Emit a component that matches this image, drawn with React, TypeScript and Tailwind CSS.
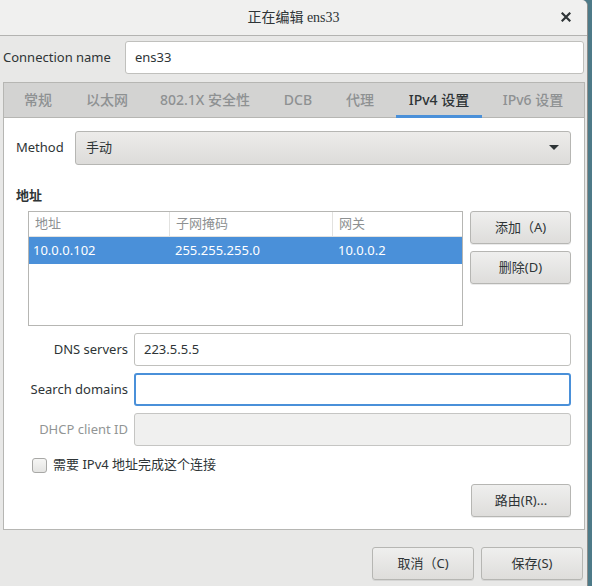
import React from "react";

const font = { fontFamily: '"Noto Sans", "Noto Sans CJK SC", sans-serif' };

function Btn({ children, className = "" }: { children: React.ReactNode; className?: string }) {
  return (
    <div
      className={
        "flex items-center justify-center h-[33px] rounded-[3px] border border-[#b6b6b3] bg-gradient-to-b from-[#efefee] to-[#dedddb] text-[13px] text-[#2e3436] shadow-[0_1px_0_rgba(0,0,0,0.08)] " +
        className
      }
    >
      {children}
    </div>
  );
}

function Field({ label, value, focus, disabled }: { label: string; value?: string; focus?: boolean; disabled?: boolean }) {
  return (
    <div className="flex items-center h-[33px]">
      <div className={"w-[112px] text-right text-[13px] " + (disabled ? "text-[#929595]" : "text-[#2e3436]")}>{label}</div>
      <div
        className={
          "ml-[6px] flex-1 h-full rounded-[3px] flex items-center px-[9px] text-[13px] text-[#2e3436] " +
          (focus
            ? "border-2 border-[#4a90d9] bg-white"
            : disabled
            ? "border border-[#c5c5c3] bg-[#f0f0ef]"
            : "border border-[#c0c0bd] bg-white")
        }
      >
        {value}
      </div>
    </div>
  );
}

export default function App() {
  const tabs = [
    { t: "常规", w: 68 },
    { t: "以太网", w: 70 },
    { t: "802.1X 安全性", w: 126 },
    { t: "DCB", w: 60 },
    { t: "代理", w: 64 },
    { t: "IPv4 设置", w: 94, active: true },
    { t: "IPv6 设置", w: 94 },
  ];
  return (
    <div className="w-[592px] h-[586px] flex overflow-hidden bg-[#4d7a88]" style={font}>
      <div className="w-[588px] h-full bg-[#e8e8e7] flex flex-col border-r border-[#8f8f8d] rounded-tr-[6px] overflow-hidden">
        {/* title bar */}
        <div className="h-[36px] shrink-0 bg-[#f0f0ef] border-b border-[#b3b3b1] flex items-center relative">
          <div
            className="flex-1 text-center text-[14px] text-[#2e3436]"
            style={{ fontFamily: '"Liberation Serif", "Noto Sans CJK SC", serif' }}
          >
            正在编辑 ens33
          </div>
          <div className="absolute right-[13px] top-[9px] w-[16px] h-[16px] flex items-center justify-center">
            <svg width="10" height="10" viewBox="0 0 10 10">
              <path d="M1.5 1.5 L8.5 8.5 M8.5 1.5 L1.5 8.5" stroke="#2e3436" strokeWidth="2.2" strokeLinecap="square" />
            </svg>
          </div>
        </div>

        {/* connection name */}
        <div className="flex items-center mt-[5px] h-[33px]">
          <div className="w-[125px] pl-[3px] text-[13px] text-[#2e3436]">Connection name</div>
          <div className="w-[459px] h-full rounded-[3px] border border-[#c0c0bd] bg-white flex items-center px-[9px] text-[13px] text-[#2e3436]">
            ens33
          </div>
        </div>

        {/* notebook */}
        <div className="ml-[3px] w-[582px] mt-[8px] border border-[#b6b6b3] flex flex-col">
          <div className="h-[35px] bg-[#d3d3d2] border-b border-[#b6b6b3] flex">
            {tabs.map((tab) => (
              <div
                key={tab.t}
                style={{ width: tab.w }}
                className="relative flex items-center justify-center text-[14px] pb-[1px]"
              >
                <span className={tab.active ? "text-[#2e3436] font-medium" : "text-[#8e9192] font-medium"}>{tab.t}</span>
                {tab.active && <div className="absolute left-[4px] right-[4px] bottom-[-1px] h-[3px] bg-[#4a90d9]" />}
              </div>
            ))}
          </div>
          <div className="bg-white pl-[12px] pr-[13px] pt-[13px] pb-[12px] flex flex-col">
            {/* method */}
            <div className="flex items-center h-[34px]">
              <div className="w-[59px] text-[13px] text-[#2e3436]">Method</div>
              <div className="flex-1 h-full rounded-[3px] border border-[#b6b6b3] bg-gradient-to-b from-[#edecea] to-[#dddcda] flex items-center pl-[10px] pr-[11px] text-[13px] text-[#2e3436]">
                <span className="flex-1">手动</span>
                <svg width="10" height="6" viewBox="0 0 10 6">
                  <path d="M0 0 H10 L5 5 Z" fill="#2e3436" />
                </svg>
              </div>
            </div>
            <div className="mt-[21px] h-[18px] leading-[18px] text-[13px] font-bold text-[#2e3436]">地址</div>
            <div className="mt-[7px] flex pl-[12px]">
              <div className="w-[435px] h-[115px] border border-[#b6b6b3] bg-white flex flex-col">
                <div className="h-[25px] flex border-b border-[#e2e2e0] text-[13px] text-[#8e9192]">
                  <div className="w-[141px] pl-[6px] flex items-center border-r border-[#e2e2e0]">地址</div>
                  <div className="w-[163px] pl-[6px] flex items-center border-r border-[#e2e2e0]">子网掩码</div>
                  <div className="flex-1 pl-[6px] flex items-center">网关</div>
                </div>
                <div className="h-[27px] flex bg-[#4a90d9] text-[13px] text-white">
                  <div className="w-[142px] pl-[4px] flex items-center">10.0.0.102</div>
                  <div className="w-[163px] pl-[4px] flex items-center">255.255.255.0</div>
                  <div className="flex-1 pl-[4px] flex items-center">10.0.0.2</div>
                </div>
              </div>
              <div className="ml-[7px] flex-1 flex flex-col gap-[7px]">
                <Btn>添加（A)</Btn>
                <Btn>删除(D)</Btn>
              </div>
            </div>
            <div className="mt-[7px] flex flex-col gap-[7px]">
              <Field label="DNS servers" value="223.5.5.5" />
              <Field label="Search domains" focus />
              <Field label="DHCP client ID" disabled />
            </div>
            <div className="mt-[10px] h-[18px] flex items-center pl-[16px]">
              <div className="w-[15px] h-[15px] rounded-[3px] border border-[#a8a8a6] bg-gradient-to-b from-[#f6f6f5] to-[#e4e4e2]" />
              <div className="ml-[6px] text-[13px] text-[#2e3436]">需要 IPv4 地址完成这个连接</div>
            </div>
            <div className="mt-[10px] flex justify-end">
              <Btn className="w-[100px]">路由(R)...</Btn>
            </div>
          </div>
        </div>

        {/* bottom buttons */}
        <div className="mt-[17px] flex justify-end gap-[7px] pr-[4px]">
          <Btn className="w-[102px]">取消（C)</Btn>
          <Btn className="w-[102px]">保存(S)</Btn>
        </div>
      </div>
    </div>
  );
}
